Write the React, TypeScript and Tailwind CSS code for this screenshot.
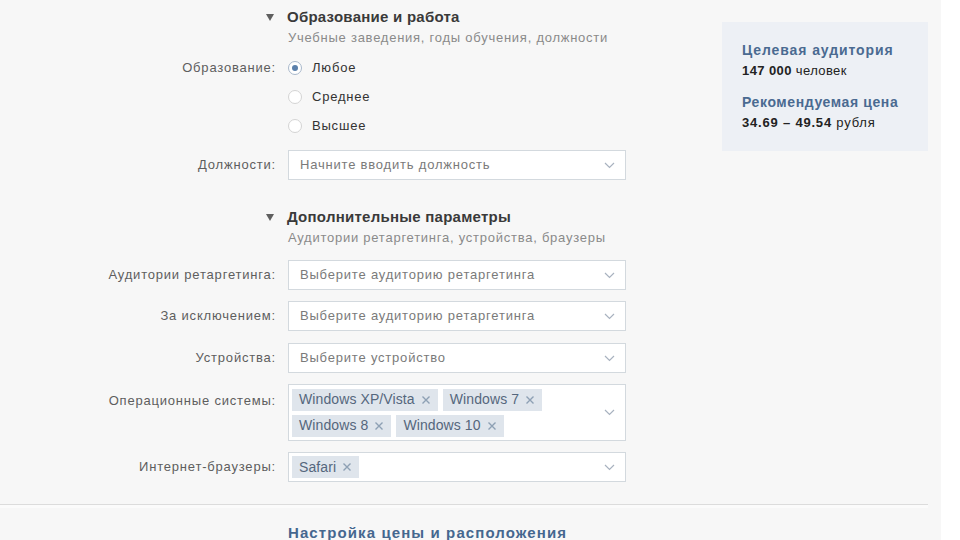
import React from "react"

const font = { fontFamily: '"Liberation Sans", Arial, sans-serif' }

function Chevron() {
  return (
    <svg width="11" height="7" viewBox="0 0 11 7" className="shrink-0">
      <path d="M1 1l4.5 4.5L10 1" fill="none" stroke="#a8b2bf" strokeWidth="1.2" />
    </svg>
  )
}

function Chip({ label }: { label: string }) {
  return (
    <span className="flex h-[22px] items-center gap-[6px] bg-[#dfe5ec] pl-[7px] pr-[7px] text-[14px] tracking-[0.1px] text-[#55677d]">
      {label}
      <svg width="10" height="10" viewBox="0 0 10 10">
        <path d="M1.5 1.5l7 7M8.5 1.5l-7 7" stroke="#8ea0b4" strokeWidth="1.4" />
      </svg>
    </span>
  )
}

function Select({ placeholder }: { placeholder: string }) {
  return (
    <div className="flex h-[30px] w-[338px] items-center justify-between border border-[#d3d9de] bg-white pl-[11px] pr-[10px]">
      <span className="text-[13px] tracking-[0.8px] text-[#7a7a7a]">{placeholder}</span>
      <Chevron />
    </div>
  )
}

function Row({
  label,
  children,
  className = "",
  top = false,
}: {
  label: string
  children: React.ReactNode
  className?: string
  top?: boolean
}) {
  return (
    <div className={`flex ${top ? "items-start" : "items-center"} ${className}`}>
      <div className={`w-[277px] pr-px text-right text-[13px] tracking-[0.8px] text-[#5e5e5e] ${top ? "pt-[7px]" : ""}`}>
        {label}
      </div>
      <div className="ml-[11px]">{children}</div>
    </div>
  )
}

function SectionHeader({ title, sub, className = "" }: { title: string; sub: string; className?: string }) {
  return (
    <div className={`ml-[266px] ${className}`}>
      <div className="flex items-center">
        <span className="mr-[13px] h-0 w-0 border-x-[4px] border-t-[7px] border-x-transparent border-t-[#5f5f5f]" />
        <span className="text-[15px] font-bold leading-[20px] tracking-[0.25px] text-[#3a3a3a]">{title}</span>
      </div>
      <div className="ml-[22px] mt-[2px] text-[13px] leading-[18px] tracking-[0.75px] text-[#8a8a8a]">{sub}</div>
    </div>
  )
}

function Radio({ label, checked }: { label: string; checked?: boolean }) {
  return (
    <div className="flex h-[29px] items-center">
      <span
        className={`flex h-[14px] w-[14px] items-center justify-center rounded-full border bg-white ${
          checked ? "border-[#a9b8cb]" : "border-[#d4d4d4]"
        }`}
      >
        {checked && <span className="h-[6px] w-[6px] rounded-full bg-[#5b80ab]" />}
      </span>
      <span className="ml-[10px] text-[13px] tracking-[0.8px] text-[#333]">{label}</span>
    </div>
  )
}

export default function App() {
  return (
    <div className="flex h-[540px] w-[960px] overflow-hidden bg-white" style={font}>
      <div className="w-[941px] bg-[#f7f7f7] pr-[13px]">
        <div className="flex">
          <div className="w-[626px] pt-[7px]">
            <SectionHeader title="Образование и работа" sub="Учебные заведения, годы обучения, должности" />

            <div className="mt-[6px] flex items-start">
              <div className="flex h-[29px] w-[277px] items-center justify-end pr-px text-[13px] tracking-[0.8px] text-[#5e5e5e]">
                Образование:
              </div>
              <div className="ml-[11px]">
                <Radio label="Любое" checked />
                <Radio label="Среднее" />
                <Radio label="Высшее" />
              </div>
            </div>

            <Row label="Должности:" className="mt-[10px]">
              <Select placeholder="Начните вводить должность" />
            </Row>

            <SectionHeader
              className="mt-[27px]"
              title="Дополнительные параметры"
              sub="Аудитории ретаргетинга, устройства, браузеры"
            />

            <Row label="Аудитории ретаргетинга:" className="mt-[13px]">
              <Select placeholder="Выберите аудиторию ретаргетинга" />
            </Row>
            <Row label="За исключением:" className="mt-[11px]">
              <Select placeholder="Выберите аудиторию ретаргетинга" />
            </Row>
            <Row label="Устройства:" className="mt-[12px]">
              <Select placeholder="Выберите устройство" />
            </Row>
            <Row label="Операционные системы:" className="mt-[11px]" top>
              <div className="flex h-[57px] w-[338px] items-center justify-between border border-[#d3d9de] bg-white pl-[3px] pr-[10px]">
                <div className="flex w-[280px] flex-wrap gap-x-[5px] gap-y-[4px]">
                  <Chip label="Windows XP/Vista" />
                  <Chip label="Windows 7" />
                  <Chip label="Windows 8" />
                  <Chip label="Windows 10" />
                </div>
                <Chevron />
              </div>
            </Row>
            <Row label="Интернет-браузеры:" className="mt-[11px]">
              <div className="flex h-[30px] w-[338px] items-center justify-between border border-[#d3d9de] bg-white pl-[3px] pr-[10px]">
                <Chip label="Safari" />
                <Chevron />
              </div>
            </Row>
          </div>

          <div className="ml-[96px] mt-[22px] h-[129px] w-[206px] bg-[#edf0f5] pl-[20px] pt-[19px]">
            <div className="text-[14px] font-bold leading-[18px] tracking-[0.9px] text-[#4a6a91]">Целевая аудитория</div>
            <div className="mt-[3px] text-[13px] leading-[18px] tracking-[0.4px] text-[#222]">
              <span className="font-bold">147 000</span> человек
            </div>
            <div className="mt-[13px] text-[14px] font-bold leading-[18px] tracking-[0.6px] text-[#4a6a91]">
              Рекомендуемая цена
            </div>
            <div className="mt-[3px] text-[13px] leading-[18px] tracking-[0.8px] text-[#222]">
              <span className="font-bold">34.69 – 49.54</span> рубля
            </div>
          </div>
        </div>

        <div className="mt-[22px] h-px bg-[#dcdcdc]" />
        <div className="h-[3px] bg-[#fbfbfb]" />

        <div className="ml-[288px] mt-[15px] text-[15px] font-bold leading-[20px] tracking-[1.1px] text-[#45678f]">
          Настройка цены и расположения
        </div>
      </div>
    </div>
  )
}
